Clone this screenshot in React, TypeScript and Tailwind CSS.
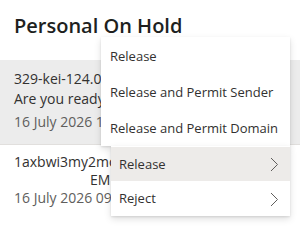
const font = { fontFamily: '"Open Sans", "Noto Sans", sans-serif' };

function Chevron() {
  return (
    <svg width="9" height="15" viewBox="0 0 9 15" fill="none" className="text-[#605e5c]">
      <path d="M1 1l6.5 6.5L1 14" stroke="currentColor" strokeWidth="1" />
    </svg>
  );
}

export default function App() {
  return (
    <div className="relative w-[300px] h-[229px] overflow-hidden bg-white text-[#323130]" style={font}>
      <div className="h-[60px] px-[14px] pt-[12px]">
        <h1 className="text-[20px] font-semibold leading-[28px] text-[#201f1e]">Personal On Hold</h1>
      </div>

      {/* selected item */}
      <div className="h-[85px] bg-[#ececec] border-b border-[#e1dfdd] px-[14px] pt-[9px] text-[14px]">
        <div className="leading-[20px] whitespace-nowrap">329-kei-124.0.0.1@example.com</div>
        <div className="leading-[20px] whitespace-nowrap">Are you ready for the meeting?</div>
        <div className="leading-[20px] mt-[3px] text-[#605e5c] whitespace-nowrap">16 July 2026 10:15</div>
      </div>

      <div className="px-[14px] pt-[8px] text-[14px]">
        <div className="leading-[18px] whitespace-nowrap">1axbwi3my2mo@example.com</div>
        <div className="leading-[18px] pl-[76px] whitespace-nowrap">EM</div>
        <div className="leading-[18px] text-[#605e5c] whitespace-nowrap">16 July 2026 09:42</div>
      </div>

      {/* submenu */}
      <div className="absolute left-[101px] top-[37px] w-[189px] bg-white shadow-[0_3px_7px_rgba(0,0,0,0.13),0_0.6px_2px_rgba(0,0,0,0.1)] text-[13px] whitespace-nowrap">
        <div className="h-[36px] flex items-center px-[9px] pt-[3px]">Release</div>
        <div className="h-[36px] flex items-center px-[9px] pt-[3px]">Release and Permit Sender</div>
        <div className="h-[37px] flex items-center px-[9px] pt-[2px]">Release and Permit Domain</div>
      </div>

      {/* context menu */}
      <div className="absolute left-[111px] top-[146px] w-[179px] bg-white shadow-[0_3px_7px_rgba(0,0,0,0.13),0_0.6px_2px_rgba(0,0,0,0.1)] text-[13px] whitespace-nowrap">
        <div className="h-[34px] mt-[1px] flex items-center justify-between pl-[8px] pr-[11px] pt-[1px] bg-[#edebe9]">
          <span>Release</span>
          <Chevron />
        </div>
        <div className="h-[35px] flex items-center justify-between pl-[8px] pr-[11px] pt-[1px]">
          <span>Reject</span>
          <Chevron />
        </div>
      </div>
    </div>
  );
}
